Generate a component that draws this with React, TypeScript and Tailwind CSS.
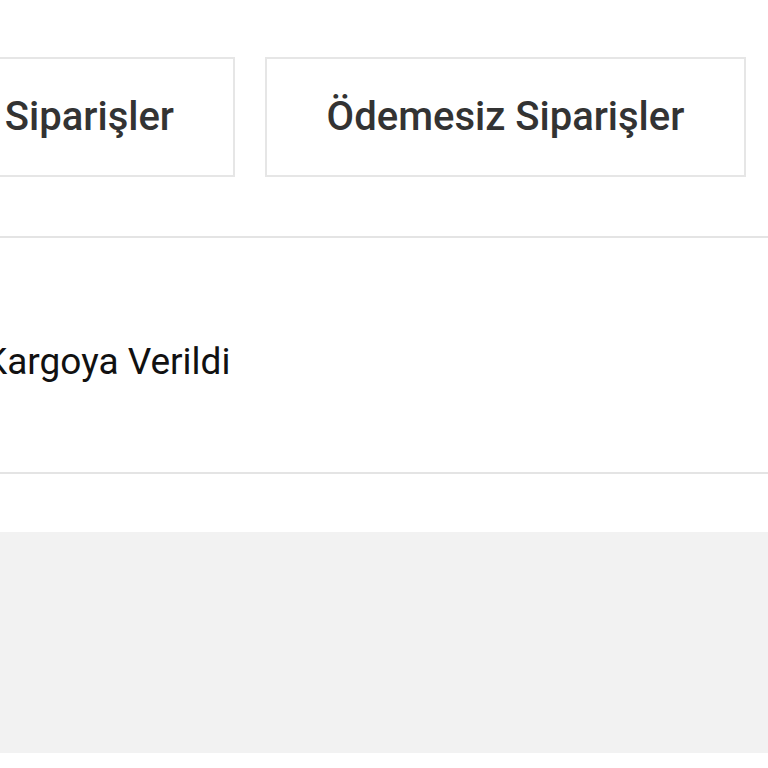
export default function App() {
  return (
    <div
      className="w-[768px] h-[768px] overflow-hidden bg-white"
      style={{ fontFamily: "Roboto, 'Noto Sans', sans-serif" }}
    >
      {/* order filter tabs */}
      <div className="pt-[57px] flex gap-[30px] ml-[-246px]">
        <div className="w-[481px] h-[120px] shrink-0 border-2 border-[#e6e6e6] flex items-center justify-end pr-[59px] text-[40px] font-medium text-[#333] whitespace-nowrap">
          Ödenmiş Siparişler
        </div>
        <div className="w-[481px] h-[120px] shrink-0 border-2 border-[#e6e6e6] flex items-center justify-center text-[40px] font-medium text-[#333] whitespace-nowrap">
          Ödemesiz Siparişler
        </div>
      </div>

      <div className="mt-[59px] h-[2px] bg-[#e4e4e4]" />

      {/* status row */}
      <div className="h-[234px] pt-[14px] flex items-center">
        <span className="ml-[-16px] text-[37px] text-[#111] whitespace-nowrap">
          Kargoya Verildi
        </span>
      </div>

      <div className="h-[2px] bg-[#e4e4e4]" />

      <div className="mt-[58px] h-[221px] bg-[#f2f2f2]" />
    </div>
  );
}
